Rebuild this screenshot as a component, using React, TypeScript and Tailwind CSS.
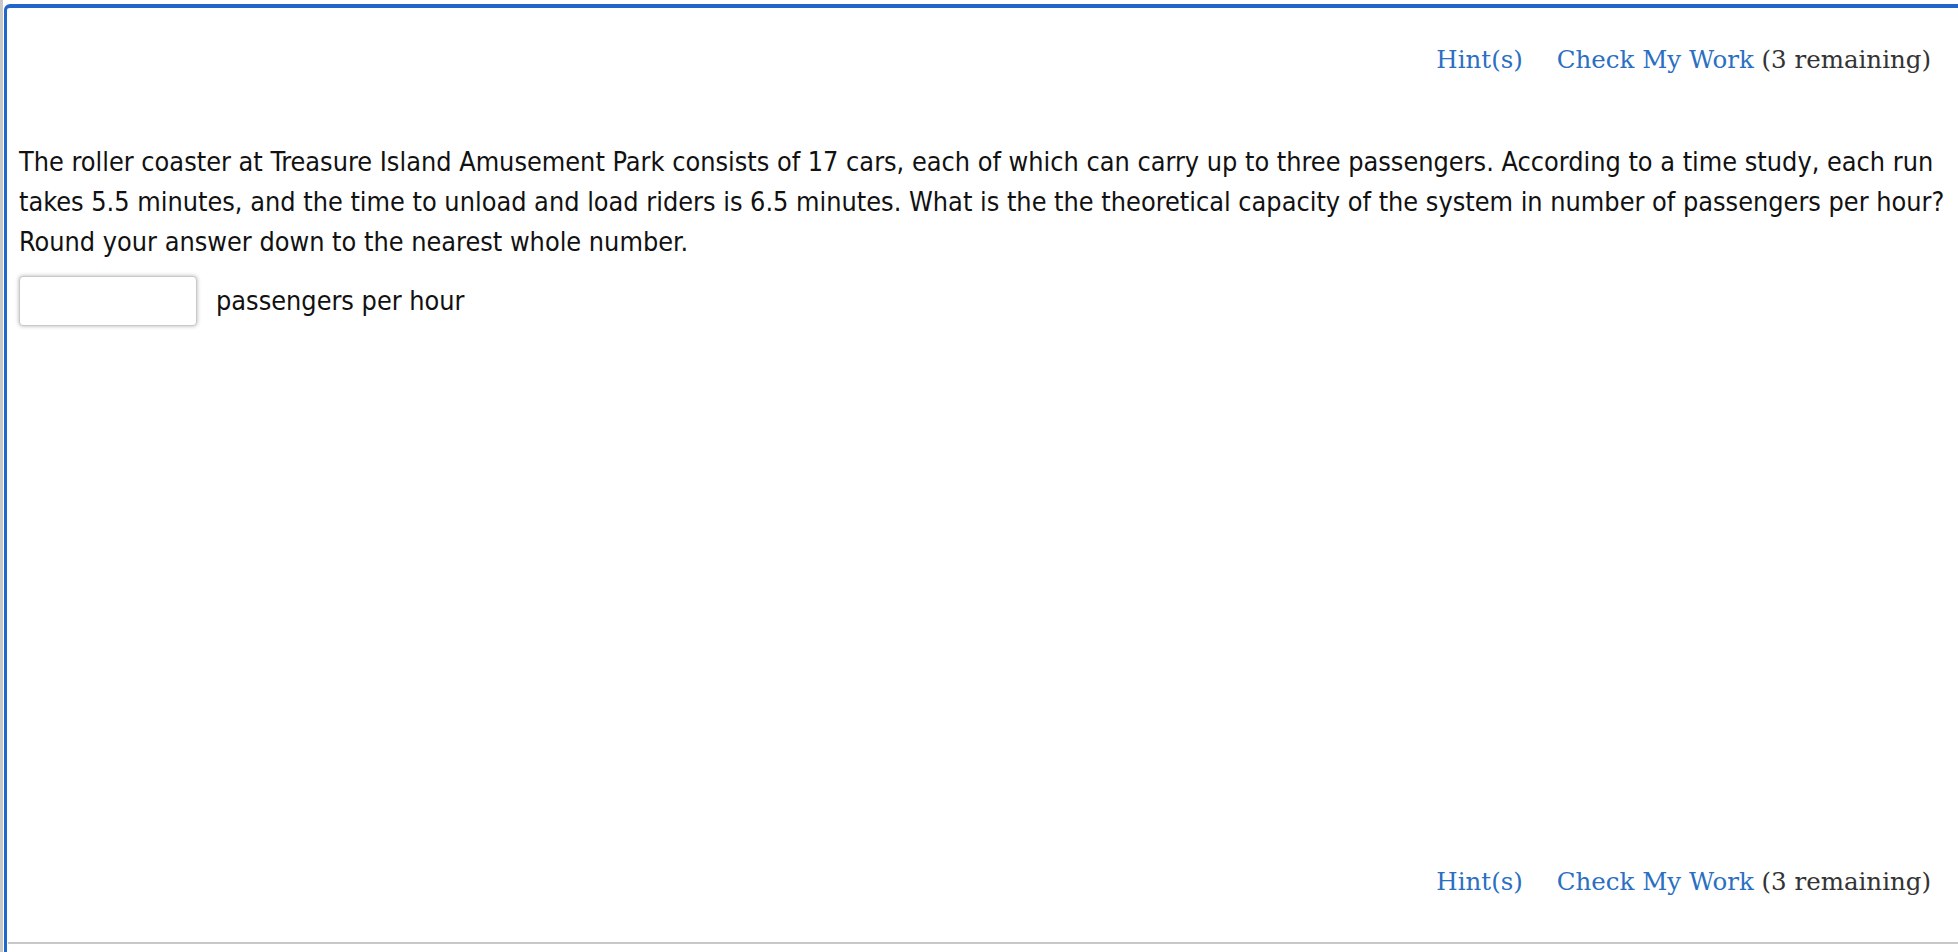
import React from "react";

function Links() {
  return (
    <div className="flex justify-end pr-[27px] font-['DejaVu_Serif',serif] text-[24.5px] leading-[40px]">
      <a className="text-[#2a6fc2] mr-[34px] cursor-pointer">Hint(s)</a>
      <span>
        <a className="text-[#2a6fc2] cursor-pointer">Check My Work</a>
        <span className="text-[#333333]"> (3 remaining)</span>
      </span>
    </div>
  );
}

export default function App() {
  return (
    <div className="flex h-[952px] w-full overflow-hidden bg-white">
      <div className="w-[3px] shrink-0 bg-[#c8c8c8]" />
      <div className="mt-[4px] ml-[1px] flex min-w-0 flex-1 flex-col rounded-tl-md border-t-4 border-l-[3px] border-[#2166c8] pb-[8px]">
        <div className="pt-[32px]">
          <Links />
        </div>
        <p className="mt-[62px] pl-[12px] pr-[2px] font-['DejaVu_Sans_Condensed','DejaVu_Sans',sans-serif] [font-stretch:condensed] text-[26.8px] leading-[40px] text-[#111111]">
          The roller coaster at Treasure Island Amusement Park consists of 17 cars, each of which can carry up to three passengers. According to a time study, each run takes 5.5 minutes, and the time to unload and load riders is 6.5 minutes. What is the the theoretical capacity of the system in number of passengers per hour? Round your answer down to the nearest whole number.
        </p>
        <div className="mt-[14px] flex items-center pl-[12px]">
          <input
            type="text"
            className="h-[50px] w-[178px] rounded-[4px] border border-[#c9c9c9] bg-white shadow-[0_0_4px_rgba(0,0,0,0.3)] outline-none"
          />
          <span className="ml-[19px] font-['DejaVu_Sans_Condensed','DejaVu_Sans',sans-serif] [font-stretch:condensed] text-[26.8px] leading-[40px] text-[#111111]">
            passengers per hour
          </span>
        </div>
        <div className="mt-auto">
          <Links />
        </div>
        <div className="mt-[40px] ml-[1px] h-[2px] bg-[#c8c8c8]" />
      </div>
    </div>
  );
}
